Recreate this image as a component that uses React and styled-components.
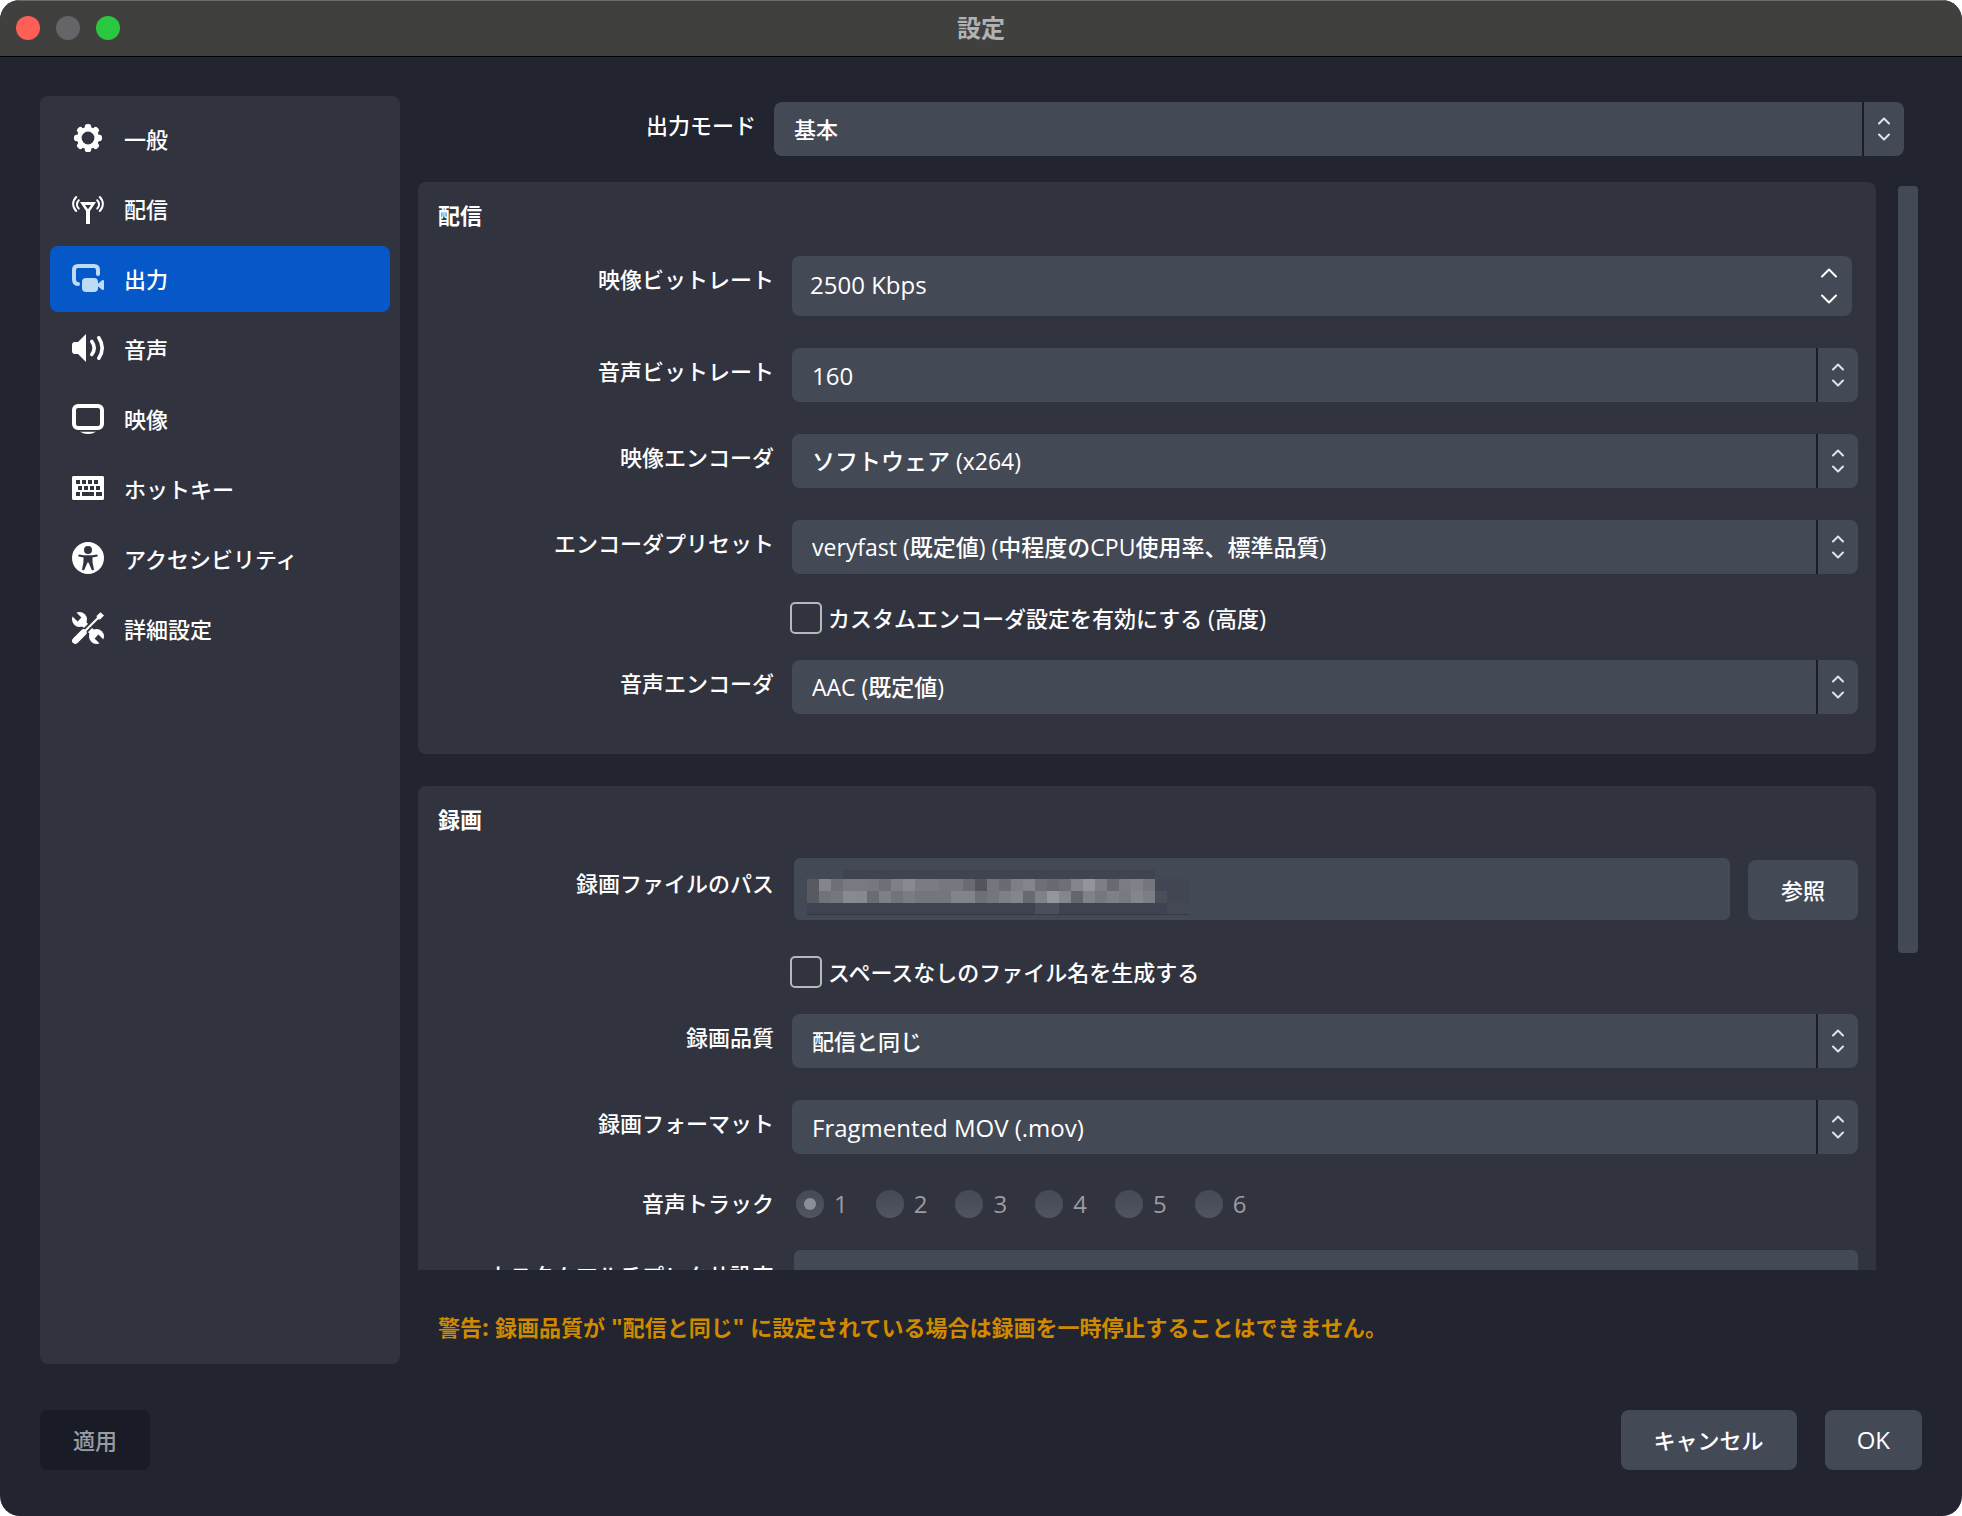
import React, { useState } from "react";
import styled, { createGlobalStyle, css } from "styled-components";

const color = {
  window: "#22242f",
  panel: "#31343f",
  control: "#444956",
  divider: "#1b1d29",
  accent: "#0658c8",
  warning: "#d08a00",
  muted: "#9a9ca3",
};

const GlobalStyle = createGlobalStyle`
  *, *::before, *::after { box-sizing: border-box; }
  body {
    margin: 0;
    background: #ffffff;
    font-family: "Open Sans", "Noto Sans CJK JP", sans-serif;
    font-size: 22px;
    font-weight: 500;
    color: #ffffff;
  }
  button, input, select { font-family: inherit; font-weight: inherit; color: inherit; }
`;

const Window = styled.div`
  display: flex;
  flex-direction: column;
  height: 100vh;
  background: ${color.window};
  border-radius: 20px;
  overflow: hidden;
`;

const TitleBar = styled.header`
  position: relative;
  display: flex;
  align-items: center;
  justify-content: center;
  flex: none;
  height: 57px;
  padding-bottom: 2px;
  background: #40403e;
  border-top: 1px solid #6c6c6a;
  border-bottom: 1px solid #000000;
`;

const Title = styled.h1`
  margin: 0;
  font-size: 24px;
  line-height: 30px;
  font-weight: 700;
  color: #b1b2b6;
`;

const TrafficLights = styled.div`
  position: absolute;
  left: 16px;
  display: flex;
  gap: 16px;
`;

const Light = styled.button`
  width: 24px;
  height: 24px;
  padding: 0;
  border: 0;
  border-radius: 50%;
  background: ${(p) => p.$color};
`;

const Body = styled.div`
  display: flex;
  flex: 1;
  min-height: 0;
  gap: 18px;
  padding: 39px 44px 0 40px;
`;

const Sidebar = styled.nav`
  display: flex;
  flex-direction: column;
  flex: none;
  gap: 4px;
  width: 360px;
  padding: 10px;
  background: ${color.panel};
  border-radius: 8px;
`;

const NavItem = styled.button`
  display: flex;
  align-items: center;
  gap: 20px;
  height: 66px;
  padding: 0 22px;
  border: 0;
  border-radius: 8px;
  background: ${(p) => (p.$active ? color.accent : "transparent")};
  font-size: 22px;
  line-height: 32px;
  text-align: left;

  svg {
    flex: none;
    overflow: visible;
    color: ${(p) => (p.$active ? "#bcdcf5" : "#ffffff")};
  }
`;

const Main = styled.main`
  display: flex;
  flex-direction: column;
  flex: 1;
  min-width: 0;
`;

const Row = styled.div`
  display: grid;
  grid-template-columns: 336px minmax(0, 1fr);
  column-gap: 18px;
  align-items: start;
  margin-top: ${(p) => p.$gap}px;
`;

const ModeRow = styled(Row)`
  grid-template-columns: 338px minmax(0, 1fr);
  padding: 6px 14px 26px 0;
`;

const labelText = css`
  font-size: 22px;
  line-height: ${(p) => (p.$tall ? 50 : 46)}px;
  text-align: right;
  white-space: nowrap;
`;

const Label = styled.label`
  ${labelText}
`;

const GroupLabel = styled.span`
  ${labelText}
`;

const ScrollArea = styled.div`
  display: flex;
  flex: 1;
  min-height: 0;
  gap: 22px;
`;

const Viewport = styled.div`
  display: flex;
  flex-direction: column;
  flex: 1;
  min-width: 0;
  gap: 32px;
  overflow: hidden;
`;

const ScrollTrack = styled.div`
  flex: none;
  width: 20px;
  padding: 4px 0;
`;

const ScrollThumb = styled.div`
  height: 71%;
  border-radius: 4px;
  background: ${color.control};
`;

const Group = styled.section`
  flex: none;
  padding: 18px 18px 40px 20px;
  background: ${color.panel};
  border-radius: 8px;
`;

const GroupTitle = styled.h2`
  margin: 0;
  font-size: 22px;
  line-height: 30px;
  font-weight: 700;
`;

const SelectBox = styled.div`
  position: relative;
`;

const SelectControl = styled.select`
  display: block;
  width: 100%;
  height: 54px;
  padding: 0 62px 0 20px;
  border: 0;
  border-radius: 8px;
  appearance: none;
  background: ${color.control};
  font-size: ${(p) => p.$size}px;
`;

const SelectArrows = styled.span`
  position: absolute;
  inset: 0 0 0 auto;
  display: flex;
  flex-direction: column;
  align-items: center;
  justify-content: center;
  gap: 8px;
  width: 42px;
  border-left: 2px solid ${color.divider};
  pointer-events: none;
`;

const SpinBox = styled.div`
  position: relative;
  margin-right: 6px;
`;

const SpinInput = styled.input`
  display: block;
  width: 100%;
  height: 60px;
  padding: 0 60px 4px 18px;
  border: 0;
  border-radius: 8px;
  background: ${color.control};
  font-size: 24px;
`;

const SpinButtons = styled.div`
  position: absolute;
  inset: 0 12px 0 auto;
  display: flex;
  flex-direction: column;
  justify-content: center;
`;

const SpinButton = styled.button`
  display: flex;
  align-items: center;
  justify-content: center;
  width: 22px;
  height: 26px;
  padding: 0;
  border: 0;
  background: transparent;
`;

const CheckLabel = styled.label`
  grid-column: 2;
  display: flex;
  align-items: center;
  gap: 6px;
  margin-left: -2px;
  font-size: 22px;
  line-height: 32px;
`;

const CheckBox = styled.input`
  width: 32px;
  height: 32px;
  margin: 0;
  appearance: none;
  border: 2px solid #b6b7bc;
  border-radius: 5px;

  &:checked {
    background: ${color.accent};
  }
`;

const Latin = styled.span`
  font-size: 24px;
`;

const PathRow = styled.div`
  display: flex;
  align-items: flex-end;
  gap: 18px;
  margin-left: 2px;
`;

const PathBox = styled.div`
  position: relative;
  flex: 1;
  min-width: 0;
`;

const TextInput = styled.input`
  display: block;
  width: 100%;
  height: 62px;
  padding: 0 16px;
  border: 0;
  border-radius: 6px;
  background: ${color.control};
  font-size: 22px;
`;

const Redaction = styled.svg`
  position: absolute;
  top: 12px;
  left: 13px;
  pointer-events: none;
`;

const Button = styled.button`
  flex: none;
  height: 60px;
  padding: 0 ${(p) => (p.$latin ? 32 : 33)}px;
  border: 0;
  border-radius: 8px;
  background: ${color.control};
  font-size: ${(p) => (p.$latin ? 24 : 22)}px;
  line-height: 32px;

  &:disabled {
    background: #191c27;
    color: ${color.muted};
  }
`;

const RadioGroup = styled.div`
  display: flex;
  align-items: center;
  gap: 28px;
  height: 48px;
  padding-left: 4px;
`;

const RadioLabel = styled.label`
  display: flex;
  align-items: center;
  gap: 10px;
  font-size: 24px;
  line-height: 32px;
  color: ${color.muted};
`;

const Radio = styled.input`
  display: grid;
  place-items: center;
  width: 28px;
  height: 28px;
  margin: 0;
  appearance: none;
  border-radius: 50%;
  background: linear-gradient(#454957, #52555f);

  &:checked::before {
    content: "";
    width: 12px;
    height: 12px;
    border-radius: 50%;
    background: #8c8e95;
  }
`;

const Warning = styled.p`
  margin: 40px 20px 20px;
  font-size: 22px;
  line-height: 34px;
  font-weight: 700;
  color: ${color.warning};
  white-space: nowrap;
`;

const Footer = styled.footer`
  display: flex;
  flex: none;
  gap: 28px;
  padding: 46px 40px;
`;

const Spacer = styled.div`
  flex: 1;
`;

const Chevron = ({ width = 12, up, stroke = "#e2e3e6" }) => (
  <svg width={width} height={width === 12 ? 8 : 10} viewBox={width === 12 ? "0 0 12 8" : "0 0 16 10"} fill="none" stroke={stroke} strokeWidth="2" strokeLinecap="round" strokeLinejoin="round">
    {width === 12 ? (
      <path d={up ? "M1 6.5L6 1.5L11 6.5" : "M1 1.5L6 6.5L11 1.5"} />
    ) : (
      <path d={up ? "M1 8.5L8 1.5L15 8.5" : "M1 1.5L8 8.5L15 1.5"} />
    )}
  </svg>
);

const Icon = ({ children }) => (
  <svg width="32" height="32" viewBox="0 0 32 32" fill="currentColor" aria-hidden="true">
    {children}
  </svg>
);

const GearIcon = () => (
  <Icon>
    <mask id="gear-hole">
      <rect width="32" height="32" fill="#fff" />
      <circle cx="16" cy="15" r="6.4" fill="#000" />
    </mask>
    <g mask="url(#gear-hole)">
      <circle cx="16" cy="15" r="11" />
      {[0, 45, 90, 135, 180, 225, 270, 315].map((a) => (
        <rect key={a} x="12.8" y="1" width="6.4" height="8" rx="2.6" transform={`rotate(${a} 16 15)`} />
      ))}
    </g>
  </Icon>
);

const AntennaIcon = () => (
  <Icon>
    <path fillRule="evenodd" d="M8 9H24L18 18V31H14V18ZM13 12L16 16.2L19 12Z" />
    <g fill="none" stroke="currentColor" strokeWidth="2" strokeLinecap="round">
      <path d="M6.8 7.2C4.4 9.8 4.4 13 6.8 15.6M25.2 7.2C27.6 9.8 27.6 13 25.2 15.6" />
      <path d="M4.2 4C0.1 8.2 0.1 13.8 4.2 18M27.8 4C31.9 8.2 31.9 13.8 27.8 18" />
    </g>
  </Icon>
);

const OutputIcon = () => (
  <Icon>
    <path fill="none" stroke="currentColor" strokeWidth="4" strokeLinecap="round" d="M26 11V7Q26 3 22 3H6Q2 3 2 7V16Q2 21 6 21" />
    <rect x="10" y="15" width="16" height="14" rx="4" />
    <path d="M25 21.5L30 17.3Q32 16.4 32 18V26Q32 27.6 30 26.7L25 22.5Z" />
  </Icon>
);

const SpeakerIcon = () => (
  <Icon>
    <path d="M3 9H6L14 1V29L6 21H3Q0 21 0 18V12Q0 9 3 9Z" />
    <g fill="none" stroke="currentColor" strokeWidth="3.6" strokeLinecap="round">
      <path d="M19.8 8.5Q24.6 15 19.8 21.5" />
      <path d="M26.8 4.8Q33.6 15 26.8 25.2" />
    </g>
  </Icon>
);

const MonitorIcon = () => (
  <Icon>
    <rect x="2" y="3" width="28" height="22" rx="4" fill="none" stroke="currentColor" strokeWidth="4" />
    <path d="M8 28.8H24Q20.5 31 16 31Q11.5 31 8 28.8Z" />
  </Icon>
);

const KeyboardIcon = () => (
  <Icon>
    <path
      fillRule="evenodd"
      d="M1 3H31L32 4V26L31 27H1L0 26V4ZM4 7V11H8V7ZM10 7V11H14V7ZM16 7V11H20V7ZM22 7V11H26V7ZM6 13V17H10V13ZM12 13V17H16V13ZM18 13V17H22V13ZM24 13V17H28V13ZM4 19V23H8V19ZM10 19V23H22V19ZM24 19V23H30V19Z"
    />
  </Icon>
);

const AccessibilityIcon = () => (
  <Icon>
    <mask id="person" maskUnits="userSpaceOnUse" x="-1" y="-2" width="34" height="34">
      <rect x="-1" y="-2" width="34" height="34" fill="#fff" />
      <circle cx="16" cy="7" r="4" fill="#000" />
      <path fill="#000" d="M7 11.4Q16 13.2 25 11.4Q26.5 12.4 25.4 13.4L20.4 14.4L20.6 19.5L22 26.4Q21 27.8 19.8 27L16.5 19.4H15.5L12.2 27Q11 27.8 10 26.4L11.4 19.5L11.6 14.4L6.6 13.4Q5.5 12.4 7 11.4Z" />
    </mask>
    <circle cx="16" cy="15" r="16" mask="url(#person)" />
  </Icon>
);

const ToolsIcon = () => (
  <Icon>
    <mask id="tool-gaps" maskUnits="userSpaceOnUse" x="-2" y="-2" width="36" height="36">
      <rect x="-2" y="-2" width="36" height="36" fill="#fff" />
      <path stroke="#000" strokeWidth="5.5" d="M-2 -3L7.5 6.5M34 33L24.5 23.5" />
      <path stroke="#000" strokeWidth="6" d="M30 1L2 29" />
    </mask>
    <g mask="url(#tool-gaps)">
      <circle cx="7.5" cy="6.5" r="7.5" />
      <circle cx="24.5" cy="23.5" r="7.5" />
      <path stroke="currentColor" strokeWidth="6" d="M7.5 6.5L24.5 23.5" />
    </g>
    <path stroke="currentColor" strokeWidth="2.2" d="M28 3L12 19" />
    <path d="M24.5 3L28.5 -0.8L32 2.5L28 6.6L25.5 6.3Z" />
    <path stroke="currentColor" strokeWidth="6.4" strokeLinecap="round" d="M11.5 19.5L3.3 27.7" />
  </Icon>
);

const navItems = [
  ["一般", GearIcon],
  ["配信", AntennaIcon],
  ["出力", OutputIcon],
  ["音声", SpeakerIcon],
  ["映像", MonitorIcon],
  ["ホットキー", KeyboardIcon],
  ["アクセシビリティ", AccessibilityIcon],
  ["詳細設定", ToolsIcon],
];

const mosaicTop = "5a 85 70 7a 7a 78 70 80 8a 7c 7c 78 78 6c 56 76 6c 7f 85 70 6a 70 85 95 7f 6b 7d 82 77".split(" ");
const mosaicBottom = "5a 73 77 8a 89 6c 80 74 7c 76 76 76 84 84 70 76 80 86 6a 82 96 86 66 82 78 80 7a 86 7e".split(" ");

const cellColor = (level) => {
  const v = parseInt(level, 16);
  return `rgb(${v - 2}, ${v}, ${v + 7})`;
};

const RedactedPath = () => (
  <Redaction width="382" height="45" viewBox="0 0 382 45" shapeRendering="crispEdges" aria-hidden="true">
    <rect x="36" y="0" width="312" height="9" fill="#404451" />
    <rect x="0" y="33" width="382" height="12" fill="#3f4351" />
    <rect x="348" y="9" width="34" height="24" fill="#424653" />
    <rect x="348" y="21" width="12" height="12" fill="#4a4e5a" />
    <rect x="228" y="33" width="24" height="11" fill="#4b4f5b" />
    <rect x="360" y="33" width="22" height="11" fill="#454956" />
    <rect x="0" y="44" width="382" height="1" fill="#353946" />
    {mosaicTop.map((level, i) => (
      <rect key={`t${i}`} x={i * 12} y="9" width="12" height="12" fill={cellColor(level)} />
    ))}
    {mosaicBottom.map((level, i) => (
      <rect key={`b${i}`} x={i * 12} y="21" width="12" height="12" fill={cellColor(level)} />
    ))}
  </Redaction>
);

const Select = ({ id, value, size = 22 }) => (
  <SelectBox>
    <SelectControl id={id} $size={size} defaultValue={value}>
      <option value={value}>{value}</option>
    </SelectControl>
    <SelectArrows>
      <Chevron up />
      <Chevron />
    </SelectArrows>
  </SelectBox>
);

const SelectRow = ({ id, label, value, size, gap = 32 }) => (
  <Row $gap={gap}>
    <Label htmlFor={id}>{label}</Label>
    <Select id={id} value={value} size={size} />
  </Row>
);

const BitrateSpin = ({ id }) => {
  const [rate, setRate] = useState(2500);
  return (
    <SpinBox>
      <SpinInput id={id} value={`${rate} Kbps`} onChange={(e) => setRate(parseInt(e.target.value, 10) || 0)} />
      <SpinButtons>
        <SpinButton type="button" aria-label="上げる" onClick={() => setRate(rate + 50)}>
          <Chevron width={16} up stroke="#ffffff" />
        </SpinButton>
        <SpinButton type="button" aria-label="下げる" onClick={() => setRate(rate - 50)}>
          <Chevron width={16} stroke="#ffffff" />
        </SpinButton>
      </SpinButtons>
    </SpinBox>
  );
};

export default function App() {
  const [page, setPage] = useState("出力");
  return (
    <Window>
      <GlobalStyle />
      <TitleBar>
        <TrafficLights>
          <Light type="button" $color="#ff5f57" aria-label="閉じる" />
          <Light type="button" $color="#656567" aria-label="しまう" />
          <Light type="button" $color="#28c840" aria-label="拡大" />
        </TrafficLights>
        <Title>設定</Title>
      </TitleBar>

      <Body>
        <Sidebar>
          {navItems.map(([name, Glyph]) => (
            <NavItem key={name} type="button" $active={page === name} onClick={() => setPage(name)}>
              <Glyph />
              {name}
            </NavItem>
          ))}
        </Sidebar>

        <Main>
          <ModeRow $gap={0}>
            <Label htmlFor="mode">出力モード</Label>
            <Select id="mode" value="基本" />
          </ModeRow>

          <ScrollArea>
            <Viewport>
              <Group>
                <GroupTitle>配信</GroupTitle>
                <Row $gap={26}>
                  <Label htmlFor="video-bitrate">映像ビットレート</Label>
                  <BitrateSpin id="video-bitrate" />
                </Row>
                <SelectRow id="audio-bitrate" label="音声ビットレート" value="160" size={24} />
                <SelectRow id="video-encoder" label="映像エンコーダ" value="ソフトウェア (x264)" size={23} />
                <SelectRow id="preset" label="エンコーダプリセット" value="veryfast (既定値) (中程度のCPU使用率、標準品質)" size={23} />
                <Row $gap={28}>
                  <CheckLabel>
                    <CheckBox type="checkbox" />
                    <span>
                      カスタムエンコーダ設定を有効にする <Latin>(</Latin>高度<Latin>)</Latin>
                    </span>
                  </CheckLabel>
                </Row>
                <SelectRow id="audio-encoder" label="音声エンコーダ" value="AAC (既定値)" size={23} gap={26} />
              </Group>

              <Group>
                <GroupTitle>録画</GroupTitle>
                <Row $gap={24}>
                  <Label htmlFor="path" $tall>
                    録画ファイルのパス
                  </Label>
                  <PathRow>
                    <PathBox>
                      <TextInput id="path" readOnly />
                      <RedactedPath />
                    </PathBox>
                    <Button type="button">参照</Button>
                  </PathRow>
                </Row>
                <Row $gap={36}>
                  <CheckLabel>
                    <CheckBox type="checkbox" />
                    <span>スペースなしのファイル名を生成する</span>
                  </CheckLabel>
                </Row>
                <SelectRow id="quality" label="録画品質" value="配信と同じ" gap={26} />
                <SelectRow id="format" label="録画フォーマット" value="Fragmented MOV (.mov)" size={24} />
                <Row $gap={26}>
                  <GroupLabel id="tracks">音声トラック</GroupLabel>
                  <RadioGroup role="radiogroup" aria-labelledby="tracks">
                    {[1, 2, 3, 4, 5, 6].map((n) => (
                      <RadioLabel key={n}>
                        <Radio type="radio" name="track" disabled defaultChecked={n === 1} />
                        {n}
                      </RadioLabel>
                    ))}
                  </RadioGroup>
                </Row>
                <Row $gap={22}>
                  <Label htmlFor="muxer" $tall>
                    カスタムマルチプレクサ設定
                  </Label>
                  <PathRow>
                    <PathBox>
                      <TextInput id="muxer" />
                    </PathBox>
                  </PathRow>
                </Row>
              </Group>
            </Viewport>
            <ScrollTrack>
              <ScrollThumb />
            </ScrollTrack>
          </ScrollArea>

          <Warning>
            警告<Latin>: </Latin>録画品質が<Latin> "</Latin>配信と同じ<Latin>" </Latin>
            に設定されている場合は録画を一時停止することはできません。
          </Warning>
        </Main>
      </Body>

      <Footer>
        <Button type="button" disabled>
          適用
        </Button>
        <Spacer />
        <Button type="button">キャンセル</Button>
        <Button type="button" $latin>
          OK
        </Button>
      </Footer>
    </Window>
  );
}
